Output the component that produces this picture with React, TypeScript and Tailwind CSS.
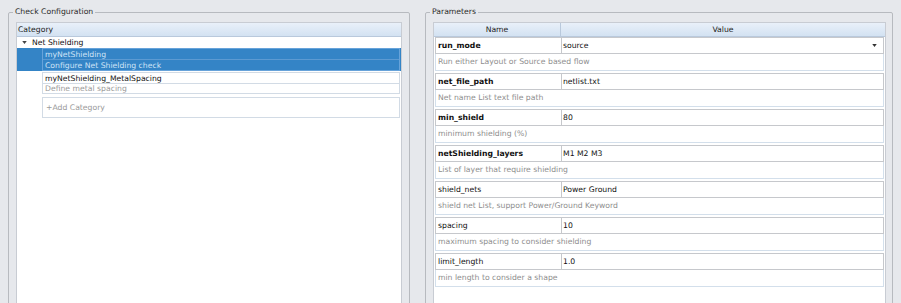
import React from 'react';

type Param = {
  name: string;
  value: string;
  desc: string;
  bold?: boolean;
  combo?: boolean;
};

const params: Param[] = [
  { name: 'run_mode', value: 'source', desc: 'Run either Layout or Source based flow', bold: true, combo: true },
  { name: 'net_file_path', value: 'netlist.txt', desc: 'Net name List text file path', bold: true },
  { name: 'min_shield', value: '80', desc: 'minimum shielding (%)', bold: true },
  { name: 'netShielding_layers', value: 'M1 M2 M3', desc: 'List of layer that require shielding', bold: true },
  { name: 'shield_nets', value: 'Power Ground', desc: 'shield net List, support Power/Ground Keyword' },
  { name: 'spacing', value: '10', desc: 'maximum spacing to consider shielding' },
  { name: 'limit_length', value: '1.0', desc: 'min length to consider a shape' },
];

function DownArrow({ className, w = 6, h = 4 }: { className?: string; w?: number; h?: number }) {
  return (
    <svg width={w} height={h} viewBox="0 0 6 4" className={className}>
      <path d="M0 0 L6 0 L3 4 Z" fill="currentColor" />
    </svg>
  );
}

function ParamBlock({ p }: { p: Param }) {
  return (
    <div className="flex flex-col mx-[1px]">
      <div className="flex h-[17px] border border-[#c6c8cc] bg-white">
        <div
          className={`w-[126px] shrink-0 border-r border-[#c6c8cc] px-[2px] leading-[15px] text-[#111] ${p.bold ? 'font-bold' : ''}`}
        >
          {p.name}
        </div>
        <div className="flex flex-1 items-center justify-between pl-[1px] pr-[6px] leading-[15px] text-[#111]">
          <span>{p.value}</span>
          {p.combo && <DownArrow w={5} h={3} className="text-[#333]" />}
        </div>
      </div>
      <div className="h-[17px] border border-t-0 border-[#d3dfeb] bg-white px-[2px] leading-[16px] text-[#8e8e8e]">
        {p.desc}
      </div>
    </div>
  );
}

function CategoryTree() {
  return (
    <div className="flex h-full flex-col border border-[#c8ccd3] bg-white">
      <div className="h-[14px] border-b border-[#b9c9dc] bg-gradient-to-b from-[#e9f0f9] to-[#d3e2f2] px-[1px] leading-[14px] text-[#222]">
        Category
      </div>
      <div className="flex h-[11px] items-center">
        <DownArrow w={5} h={3} className="ml-[5px] mr-[5px] text-[#444]" />
        <span className="leading-[11px] text-[#111]">Net Shielding</span>
      </div>
      <div className="h-[23px] bg-[#3484c6] pl-[25px] pr-[1px]">
        <div className="flex h-full flex-col border border-[#67a3da] text-[#cfe3f6]">
          <div className="h-[11px] border-b border-[#5c9ad2] px-[2px] leading-[11px]">myNetShielding</div>
          <div className="flex-1 px-[2px] leading-[11px]">Configure Net Shielding check</div>
        </div>
      </div>
      <div className="h-[24px] pl-[25px] pr-[1px] pt-[1px]">
        <div className="flex h-[22px] flex-col border border-[#d2dbe5]">
          <div className="h-[11px] border-b border-[#d2dbe5] px-[2px] leading-[11px] text-[#111]">
            myNetShielding_MetalSpacing
          </div>
          <div className="flex-1 px-[2px] leading-[10px] text-[#9a9a9a]">Define metal spacing</div>
        </div>
      </div>
      <div className="pl-[25px] pr-[1px] pt-[2px]">
        <div className="h-[21px] border border-[#d2dbe5] px-[3px] leading-[20px] text-[#9a9a9a]">+Add Category</div>
      </div>
    </div>
  );
}

function ParamTable() {
  return (
    <div className="flex h-full flex-col border border-[#c8ccd3] bg-white">
      <div className="flex h-[14px] border-b border-[#b9c9dc] bg-gradient-to-b from-[#e9f0f9] to-[#d3e2f2] leading-[13px] text-[#222]">
        <div className="w-[127px] shrink-0 border-r border-[#b9c9dc] text-center">Name</div>
        <div className="flex-1 text-center">Value</div>
      </div>
      <div className="flex flex-col gap-[2px]">
        {params.map((p) => (
          <ParamBlock key={p.name} p={p} />
        ))}
      </div>
    </div>
  );
}

export default function App() {
  return (
    <div className="flex h-[303px] w-[901px] overflow-hidden bg-[#e6e8ec] font-['DejaVu_Sans',sans-serif] text-[7.7px]">
      <fieldset className="ml-[8px] mt-[6px] h-[330px] w-[402px] shrink-0 rounded-[2px] border border-[#b7babf] px-[7px] pt-[4px]">
        <legend className="-ml-[3px] px-[2px] leading-[12px] text-[#2a2a2a]">Check Configuration</legend>
        <CategoryTree />
      </fieldset>
      <fieldset className="ml-[15px] mt-[6px] h-[330px] w-[468px] shrink-0 rounded-[2px] border border-[#b7babf] pl-[7px] pr-[6px] pt-[4px]">
        <legend className="-ml-[3px] px-[2px] leading-[12px] text-[#2a2a2a]">Parameters</legend>
        <ParamTable />
      </fieldset>
    </div>
  );
}
